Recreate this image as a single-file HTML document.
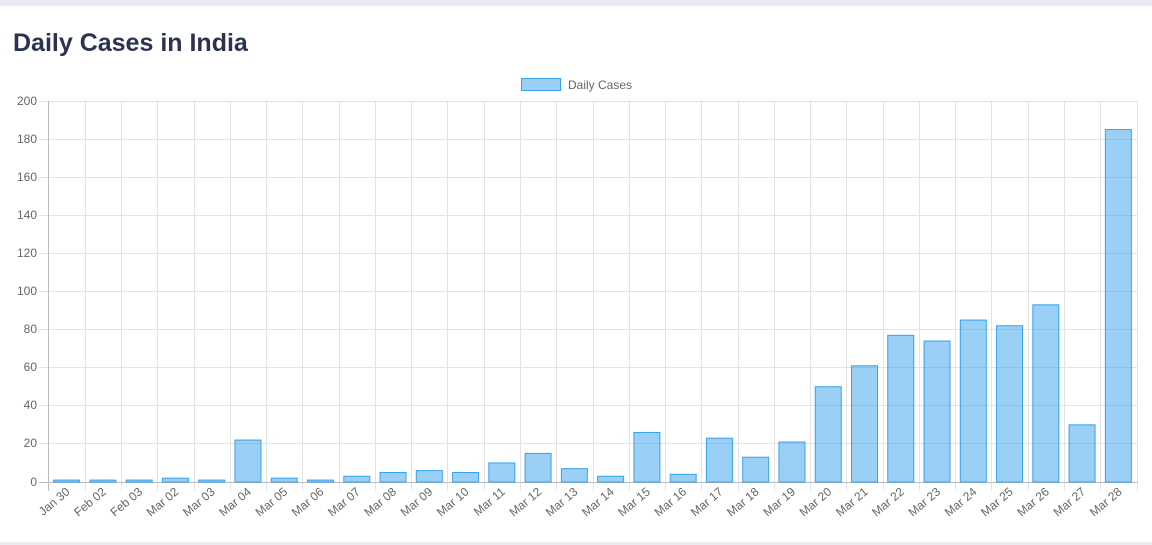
<!DOCTYPE html>
<html><head><meta charset="utf-8"><style>
html,body{margin:0;padding:0;width:1152px;height:545px;overflow:hidden;background:#ebebf5;font-family:"Liberation Sans",sans-serif;}
.card{position:absolute;left:0;top:6px;width:1152px;height:536px;background:#fff;}
h1{position:absolute;left:13px;top:29px;margin:0;font-size:25px;font-weight:bold;color:#2a3350;letter-spacing:0px;}
svg{position:absolute;left:0;top:0;}
</style></head><body>
<div class="card"></div>
<h1>Daily Cases in India</h1>
<svg width="1152" height="545" font-family="Liberation Sans, sans-serif" font-size="12" fill="#666">
<rect x="521.5" y="78.5" width="39" height="12" fill="rgba(54,162,235,0.5)" stroke="#36a2eb"/>
<text x="568" y="89">Daily Cases</text>
<g stroke="#e3e3e3" stroke-width="1">
<line x1="39" x2="1137" y1="101.5" y2="101.5"/><line x1="39" x2="1137" y1="139.5" y2="139.5"/><line x1="39" x2="1137" y1="177.5" y2="177.5"/><line x1="39" x2="1137" y1="215.5" y2="215.5"/><line x1="39" x2="1137" y1="253.5" y2="253.5"/><line x1="39" x2="1137" y1="291.5" y2="291.5"/><line x1="39" x2="1137" y1="329.5" y2="329.5"/><line x1="39" x2="1137" y1="367.5" y2="367.5"/><line x1="39" x2="1137" y1="405.5" y2="405.5"/><line x1="39" x2="1137" y1="443.5" y2="443.5"/>
</g>
<g stroke="#e3e3e3" stroke-width="1" id="vg"></g>
<line x1="39" x2="1137" y1="482.5" y2="482.5" stroke="#bbb"/>
<line x1="48.5" x2="48.5" y1="101" y2="491" stroke="#bbb"/>
<g text-anchor="end">
<text x="37" y="105">200</text><text x="37" y="143">180</text><text x="37" y="181">160</text><text x="37" y="219">140</text><text x="37" y="257">120</text><text x="37" y="295">100</text><text x="37" y="333">80</text><text x="37" y="371">60</text><text x="37" y="409">40</text><text x="37" y="447">20</text><text x="37" y="486">0</text>
</g>
<g id="bars" fill="rgba(54,162,235,0.5)" stroke="#36a2eb" stroke-width="1"></g>
<g text-anchor="end" id="lbl">
<text transform="translate(70.6,493) rotate(-40)">Jan 30</text>
<text transform="translate(106.9,493) rotate(-40)">Feb 02</text>
<text transform="translate(143.2,493) rotate(-40)">Feb 03</text>
<text transform="translate(179.4,493) rotate(-40)">Mar 02</text>
<text transform="translate(215.7,493) rotate(-40)">Mar 03</text>
<text transform="translate(252,493) rotate(-40)">Mar 04</text>
<text transform="translate(288.3,493) rotate(-40)">Mar 05</text>
<text transform="translate(324.5,493) rotate(-40)">Mar 06</text>
<text transform="translate(360.8,493) rotate(-40)">Mar 07</text>
<text transform="translate(397.1,493) rotate(-40)">Mar 08</text>
<text transform="translate(433.4,493) rotate(-40)">Mar 09</text>
<text transform="translate(469.6,493) rotate(-40)">Mar 10</text>
<text transform="translate(505.9,493) rotate(-40)">Mar 11</text>
<text transform="translate(542.2,493) rotate(-40)">Mar 12</text>
<text transform="translate(578.5,493) rotate(-40)">Mar 13</text>
<text transform="translate(614.7,493) rotate(-40)">Mar 14</text>
<text transform="translate(651,493) rotate(-40)">Mar 15</text>
<text transform="translate(687.3,493) rotate(-40)">Mar 16</text>
<text transform="translate(723.6,493) rotate(-40)">Mar 17</text>
<text transform="translate(759.8,493) rotate(-40)">Mar 18</text>
<text transform="translate(796.1,493) rotate(-40)">Mar 19</text>
<text transform="translate(832.4,493) rotate(-40)">Mar 20</text>
<text transform="translate(868.7,493) rotate(-40)">Mar 21</text>
<text transform="translate(904.9,493) rotate(-40)">Mar 22</text>
<text transform="translate(941.2,493) rotate(-40)">Mar 23</text>
<text transform="translate(977.5,493) rotate(-40)">Mar 24</text>
<text transform="translate(1013.8,493) rotate(-40)">Mar 25</text>
<text transform="translate(1050,493) rotate(-40)">Mar 26</text>
<text transform="translate(1086.3,493) rotate(-40)">Mar 27</text>
<text transform="translate(1122.6,493) rotate(-40)">Mar 28</text>
</g>
</svg>
<script>
var ns="http://www.w3.org/2000/svg";
var vals=[1,1,1,2,1,22,2,1,3,5,6,5,10,15,7,3,26,4,23,13,21,50,61,77,74,85,82,93,30,185];
var vg=document.getElementById("vg"),bars=document.getElementById("bars");
var w=(1136.5-48.5)/30;
for(var j=1;j<=30;j++){var x=Math.round(48.5+w*j)+0.5;var l=document.createElementNS(ns,"line");l.setAttribute("x1",x);l.setAttribute("x2",x);l.setAttribute("y1",101);l.setAttribute("y2",491);vg.appendChild(l);}
for(var i=0;i<30;i++){var c=48.5+w*(i+0.5);var h=vals[i]*381/200;var r=document.createElementNS(ns,"rect");r.setAttribute("x",c-13);r.setAttribute("width",26);r.setAttribute("y",482-h);r.setAttribute("height",h);bars.appendChild(r);}
</script>
</body></html>
